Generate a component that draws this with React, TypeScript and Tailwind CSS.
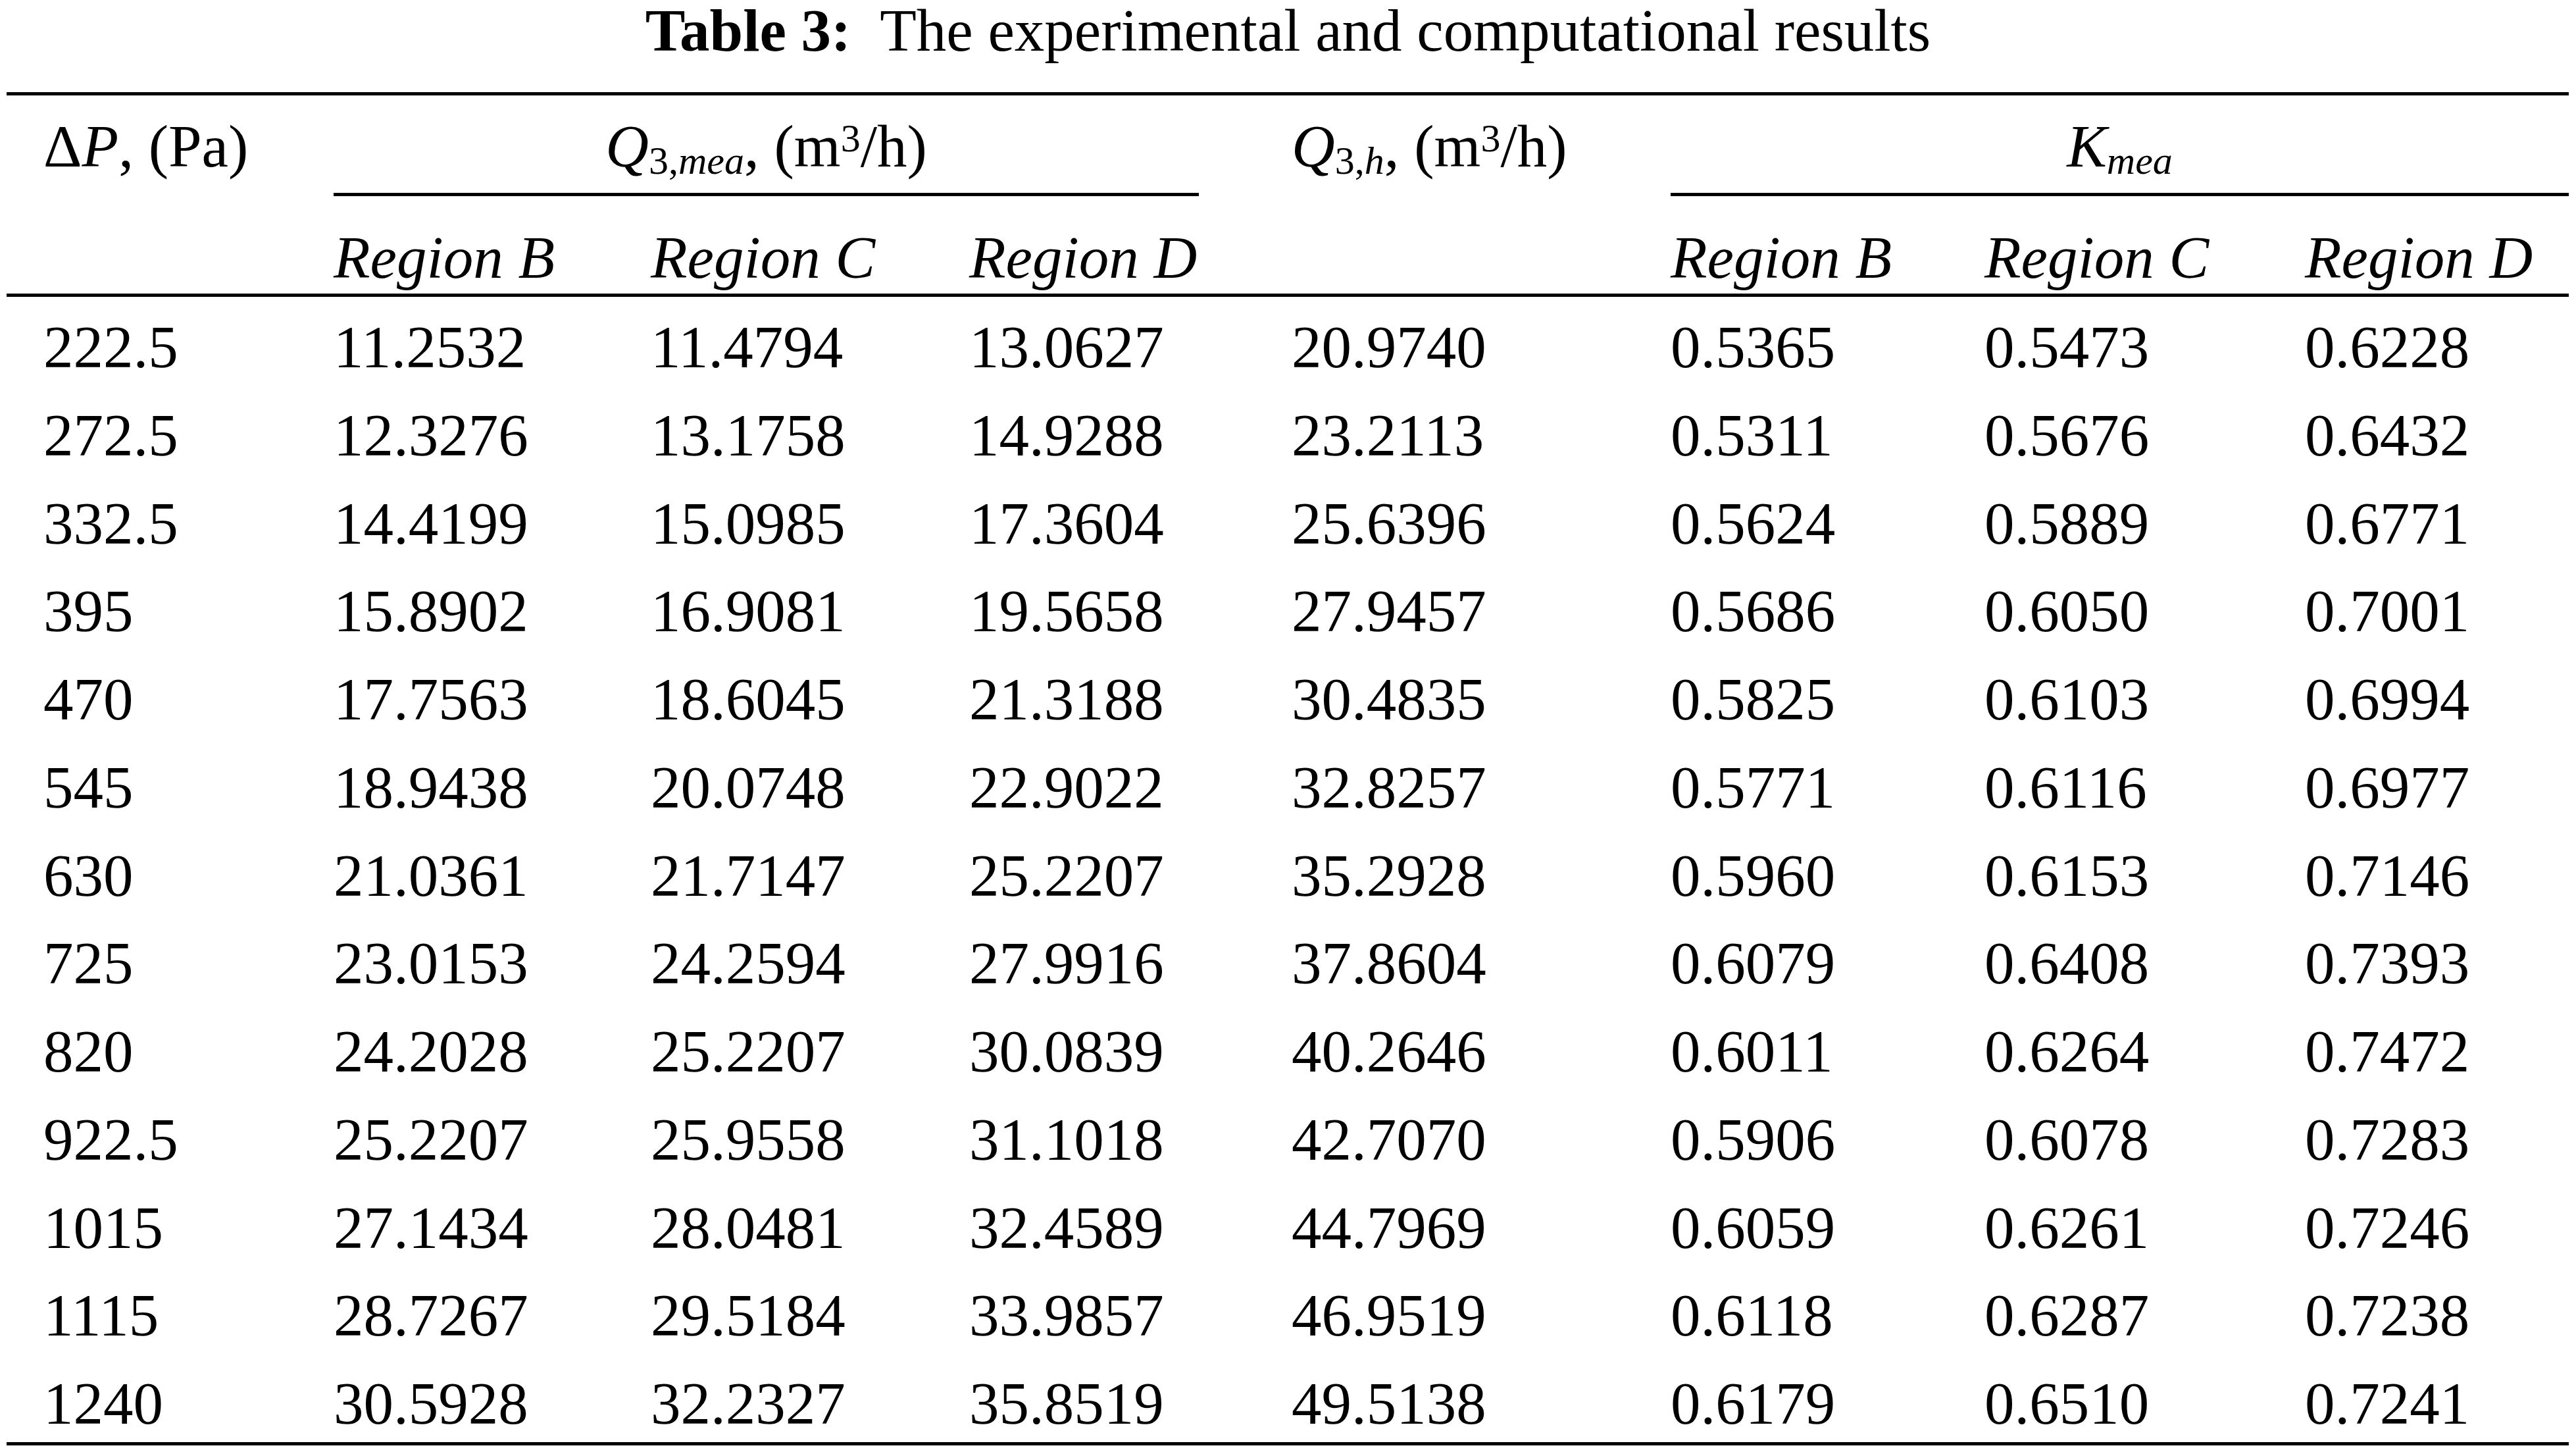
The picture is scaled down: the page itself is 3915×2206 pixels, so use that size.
const rows = [
  ["222.5", "11.2532", "11.4794", "13.0627", "20.9740", "0.5365", "0.5473", "0.6228"],
  ["272.5", "12.3276", "13.1758", "14.9288", "23.2113", "0.5311", "0.5676", "0.6432"],
  ["332.5", "14.4199", "15.0985", "17.3604", "25.6396", "0.5624", "0.5889", "0.6771"],
  ["395", "15.8902", "16.9081", "19.5658", "27.9457", "0.5686", "0.6050", "0.7001"],
  ["470", "17.7563", "18.6045", "21.3188", "30.4835", "0.5825", "0.6103", "0.6994"],
  ["545", "18.9438", "20.0748", "22.9022", "32.8257", "0.5771", "0.6116", "0.6977"],
  ["630", "21.0361", "21.7147", "25.2207", "35.2928", "0.5960", "0.6153", "0.7146"],
  ["725", "23.0153", "24.2594", "27.9916", "37.8604", "0.6079", "0.6408", "0.7393"],
  ["820", "24.2028", "25.2207", "30.0839", "40.2646", "0.6011", "0.6264", "0.7472"],
  ["922.5", "25.2207", "25.9558", "31.1018", "42.7070", "0.5906", "0.6078", "0.7283"],
  ["1015", "27.1434", "28.0481", "32.4589", "44.7969", "0.6059", "0.6261", "0.7246"],
  ["1115", "28.7267", "29.5184", "33.9857", "46.9519", "0.6118", "0.6287", "0.7238"],
  ["1240", "30.5928", "32.2327", "35.8519", "49.5138", "0.6179", "0.6510", "0.7241"],
];

const cols = "grid grid-cols-[441px_482px_484px_490px_576px_477px_487px_401px] pl-[56px]";

function Sub({ children }: { children: React.ReactNode }) {
  return <span className="relative top-[0.18em] text-[0.66em] leading-none">{children}</span>;
}

function Sup({ children }: { children: React.ReactNode }) {
  return <span className="relative top-[-0.38em] text-[0.66em] leading-none">{children}</span>;
}

function Rule({ className = "" }: { className?: string }) {
  return <div className={"h-[5px] bg-black " + className} />;
}

export default function App() {
  return (
    <div className="h-[2206px] w-[3915px] overflow-hidden bg-white pt-[2px] font-['Liberation_Serif','Times_New_Roman',serif] text-[91px] leading-[90px] text-black">
      <div className="whitespace-pre text-center">
        <span className="font-bold">Table 3:</span>
        {"  The experimental and computational results"}
      </div>

      <div className="ml-[10px] mt-[48px] w-[3894px]">
        <Rule />

        {/* header */}
        <div className={cols + " pt-[33px]"}>
          <div className="whitespace-pre">
            Δ<i>P</i>, (Pa)
          </div>
          <div className="col-span-3">
            <div className="w-[1315px] whitespace-pre text-center">
              <i>Q</i>
              <Sub>
                3,<i>mea</i>
              </Sub>
              , (m<Sup>3</Sup>/h)
            </div>
            <Rule className="mt-[25px] w-[1315px]" />
          </div>
          <div className="whitespace-pre">
            <i>Q</i>
            <Sub>
              3,<i>h</i>
            </Sub>
            , (m<Sup>3</Sup>/h)
          </div>
          <div className="col-span-3">
            <div className="text-center">
              <i>K</i>
              <Sub>
                <i>mea</i>
              </Sub>
            </div>
            <Rule className="mt-[25px]" />
          </div>

          <div className="col-start-2 mt-[49px] italic">Region B</div>
          <div className="mt-[49px] italic">Region C</div>
          <div className="mt-[49px] italic">Region D</div>
          <div className="col-start-6 mt-[49px] italic">Region B</div>
          <div className="mt-[49px] italic">Region C</div>
          <div className="mt-[49px] italic">Region D</div>
        </div>

        <Rule className="mt-[9px]" />

        {/* body */}
        <div className={cols + " gap-y-[43.75px] pt-[32px]"}>
          {rows.map((r) =>
            r.map((v, i) => <div key={r[0] + "-" + i}>{v}</div>)
          )}
        </div>

        <Rule className="mt-[13px]" />
      </div>
    </div>
  );
}
